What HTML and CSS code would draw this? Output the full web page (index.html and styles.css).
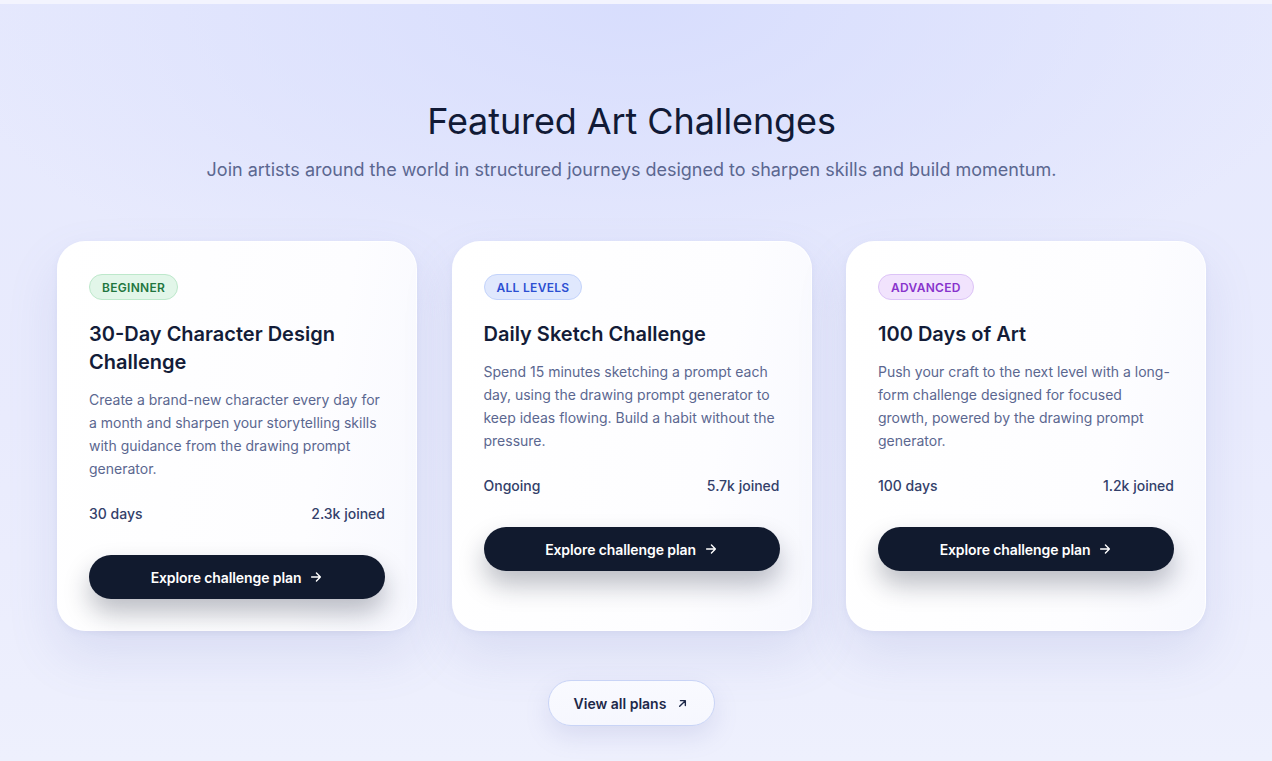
FILE: index.html
```html
<!DOCTYPE html>
<html lang="en">
<head>
<meta charset="utf-8">
<title>Featured Art Challenges</title>
<link rel="stylesheet" href="styles.css">
</head>
<body>
<section class="challenges">
  <header class="intro">
    <h1 class="intro-title">Featured Art Challenges</h1>
    <p class="intro-sub">Join artists around the world in structured journeys designed to sharpen skills and build momentum.</p>
  </header>

  <div class="card-grid">
    <article class="card">
      <span class="badge badge-green">Beginner</span>
      <h2 class="card-title">30-Day Character Design Challenge</h2>
      <p class="card-desc">Create a brand-new character every day for a month and sharpen your storytelling skills with guidance from the drawing prompt generator.</p>
      <div class="card-meta"><span>30 days</span><span>2.3k joined</span></div>
      <a class="cta" href="#">Explore challenge plan
        <svg class="cta-icon" viewBox="0 0 16 16" width="14" height="14" fill="none" stroke="currentColor" stroke-width="1.6" stroke-linecap="round" stroke-linejoin="round"><path d="M3 8h10M8.5 3.5 13 8l-4.5 4.5"/></svg>
      </a>
    </article>

    <article class="card">
      <span class="badge badge-blue">All levels</span>
      <h2 class="card-title">Daily Sketch Challenge</h2>
      <p class="card-desc">Spend 15 minutes sketching a prompt each day, using the drawing prompt generator to keep ideas flowing. Build a habit without the pressure.</p>
      <div class="card-meta"><span>Ongoing</span><span>5.7k joined</span></div>
      <a class="cta" href="#">Explore challenge plan
        <svg class="cta-icon" viewBox="0 0 16 16" width="14" height="14" fill="none" stroke="currentColor" stroke-width="1.6" stroke-linecap="round" stroke-linejoin="round"><path d="M3 8h10M8.5 3.5 13 8l-4.5 4.5"/></svg>
      </a>
    </article>

    <article class="card">
      <span class="badge badge-purple">Advanced</span>
      <h2 class="card-title">100 Days of Art</h2>
      <p class="card-desc">Push your craft to the next level with a long-form challenge designed for focused growth, powered by the drawing prompt generator.</p>
      <div class="card-meta"><span>100 days</span><span>1.2k joined</span></div>
      <a class="cta" href="#">Explore challenge plan
        <svg class="cta-icon" viewBox="0 0 16 16" width="14" height="14" fill="none" stroke="currentColor" stroke-width="1.6" stroke-linecap="round" stroke-linejoin="round"><path d="M3 8h10M8.5 3.5 13 8l-4.5 4.5"/></svg>
      </a>
    </article>
  </div>

  <div class="more">
    <a class="more-btn" href="#">View all plans
      <svg class="more-icon" viewBox="0 0 16 16" width="13" height="13" fill="none" stroke="currentColor" stroke-width="1.7" stroke-linecap="round" stroke-linejoin="round"><path d="M4.5 11.5l7-7M5.5 4.5h6v6"/></svg>
    </a>
  </div>
</section>
</body>
</html>
```
FILE: styles.css
```css
* { box-sizing: border-box; }

html, body {
  margin: 0;
  padding: 0;
}

body {
  font-family: Inter, "Noto Sans", "Liberation Sans", sans-serif;
  background: #f3f4fe;
  color: #111a36;
}

.challenges {
  margin-top: 4px;
  height: 757px;
  padding: 95px 65px 0 56px;
  background:
    radial-gradient(ellipse 700px 330px at 50% 0%, rgba(214, 220, 253, 0.9), rgba(214, 220, 253, 0) 100%),
    linear-gradient(180deg, #e6e9fd 0%, #e9ebfd 55%, #eef0fd 100%);
}

.intro {
  text-align: center;
}

.intro-title {
  margin: 0;
  font-size: 36px;
  line-height: 44px;
  font-weight: 400;
  letter-spacing: -0.1px;
  color: #111a36;
}

.intro-sub {
  margin: 13px 0 0;
  font-size: 18px;
  line-height: 28px;
  color: #5b6790;
}

.card-grid {
  margin: 57px auto 0;
  width: 1149px;
  display: grid;
  grid-template-columns: repeat(3, 360px);
  column-gap: 34.5px;
  align-items: stretch;
}

.card {
  display: flex;
  flex-direction: column;
  align-items: flex-start;
  padding: 32px 31px 31px;
  border-radius: 28px;
  background: linear-gradient(100deg, #ffffff 0%, #fdfdff 70%, #f7f8fe 100%);
  border: 1px solid rgba(255, 255, 255, 0.9);
  box-shadow: 0 24px 50px rgba(120, 130, 190, 0.16), 0 2px 6px rgba(120, 130, 190, 0.08);
}

.badge {
  display: inline-flex;
  align-items: center;
  height: 26px;
  padding: 0 12px;
  border-radius: 13px;
  font-size: 12px;
  font-weight: 600;
  letter-spacing: 0.3px;
  text-transform: uppercase;
  border: 1px solid transparent;
}

.badge-green {
  background: #e2f6e9;
  border-color: #bde8cb;
  color: #22763f;
}

.badge-blue {
  background: #e0e8fd;
  border-color: #c3d3fb;
  color: #2c4fd2;
}

.badge-purple {
  background: #f1e3fd;
  border-color: #dcc3f7;
  color: #8833cc;
}

.card-title {
  margin: 20px 0 0;
  font-size: 20px;
  line-height: 28px;
  font-weight: 600;
  color: #131c38;
}

.card-desc {
  margin: 12px 0 0;
  font-size: 14px;
  line-height: 23px;
  color: #5b6790;
}

.card-meta {
  align-self: stretch;
  display: flex;
  justify-content: space-between;
  margin-top: 24px;
  font-size: 14px;
  line-height: 20px;
  font-weight: 500;
  color: #33406a;
}

.cta {
  align-self: stretch;
  margin-top: 31px;
  height: 44px;
  border-radius: 22px;
  background: #111a2e;
  color: #ffffff;
  text-decoration: none;
  display: flex;
  align-items: center;
  justify-content: center;
  gap: 8px;
  font-size: 14px;
  font-weight: 600;
  letter-spacing: -0.1px;
  box-shadow: 0 14px 26px rgba(17, 26, 46, 0.28);
}

.cta-icon {
  flex: none;
}

.more {
  display: flex;
  justify-content: center;
  margin-top: 49px;
}

.more-btn {
  display: inline-flex;
  align-items: center;
  gap: 10px;
  height: 46px;
  padding: 0 25px;
  border-radius: 23px;
  background: linear-gradient(180deg, #f9faff, #f6f7fe);
  border: 1px solid #c9d4f6;
  color: #1d2848;
  font-size: 14px;
  font-weight: 600;
  text-decoration: none;
  box-shadow: 0 10px 24px rgba(120, 130, 190, 0.18);
}

.more-icon {
  flex: none;
}
```
